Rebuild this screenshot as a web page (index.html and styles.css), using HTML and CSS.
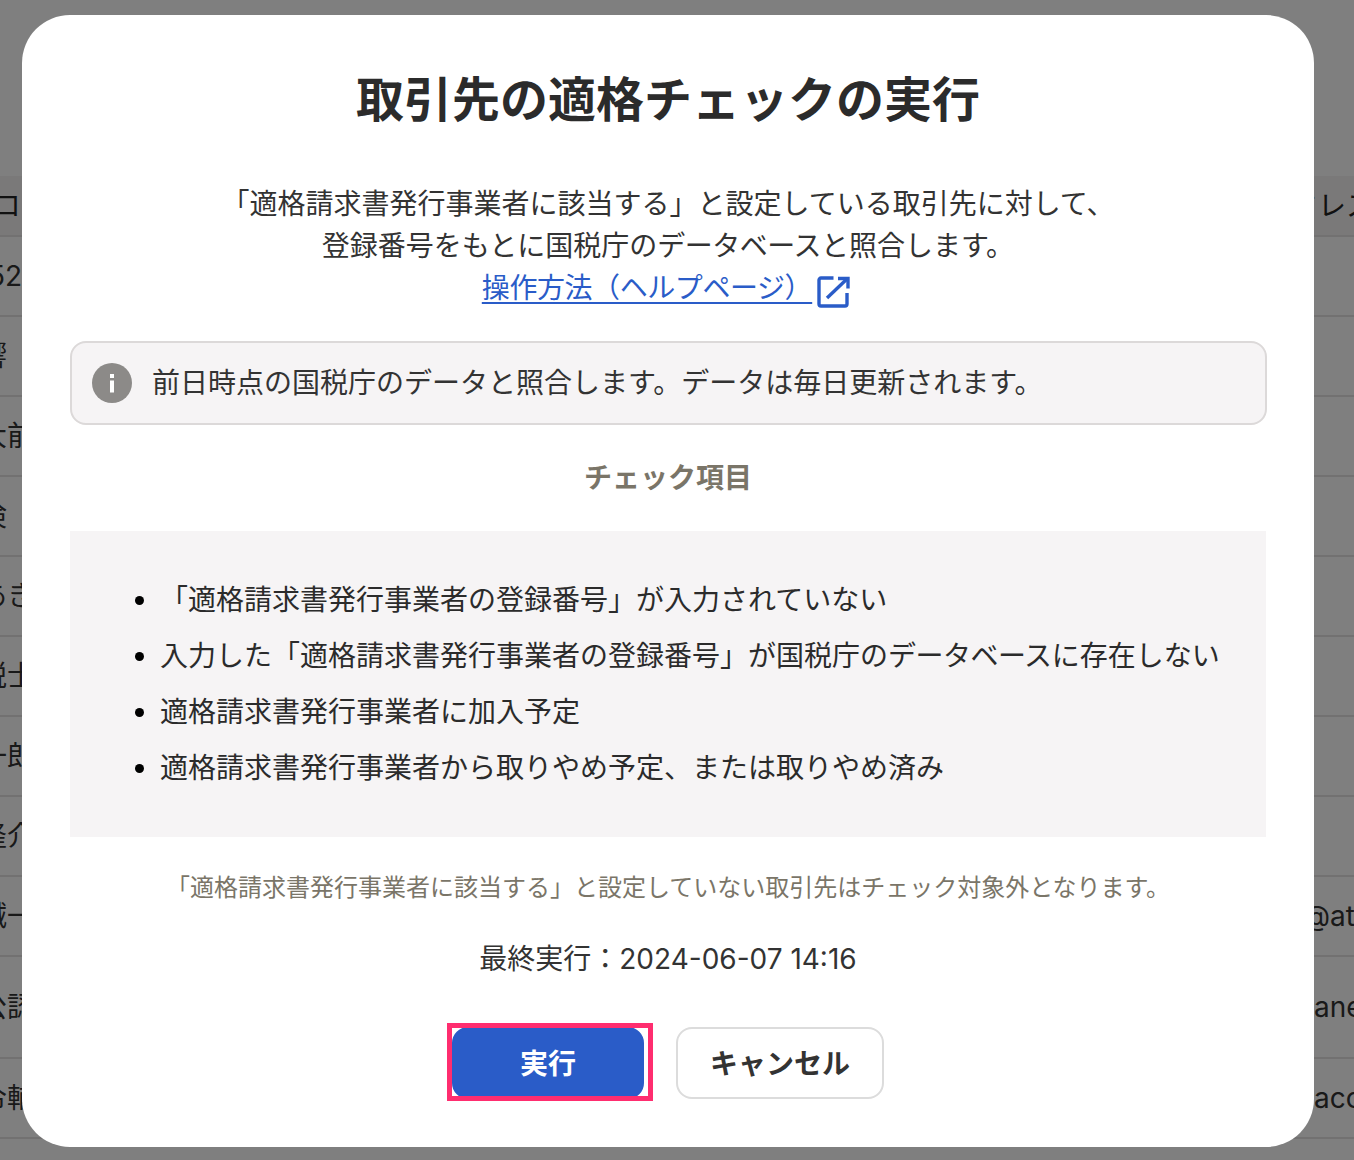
FILE: index.html
```html
<!DOCTYPE html>
<html lang="ja">
<head>
<meta charset="utf-8">
<title>取引先の適格チェックの実行</title>
<link rel="stylesheet" href="styles.css">
</head>
<body>
<div class="table">
  <div class="row head"><div class="cell-l code">コード</div><div class="cell-r addr">アドレス</div></div>
  <div class="row"><div class="cell-l num">52</div><div class="cell-r"></div></div>
  <div class="row"><div class="cell-l">響</div><div class="cell-r"></div></div>
  <div class="row"><div class="cell-l">大前</div><div class="cell-r"></div></div>
  <div class="row"><div class="cell-l">倹</div><div class="cell-r"></div></div>
  <div class="row"><div class="cell-l">あき</div><div class="cell-r"></div></div>
  <div class="row"><div class="cell-l">税士</div><div class="cell-r"></div></div>
  <div class="row"><div class="cell-l">一郎</div><div class="cell-r"></div></div>
  <div class="row"><div class="cell-l">隆介</div><div class="cell-r"></div></div>
  <div class="row"><div class="cell-l">誠一</div><div class="cell-r at">@at</div></div>
  <div class="row tall"><div class="cell-l">公認</div><div class="cell-r">ane</div></div>
  <div class="row"><div class="cell-l">令輔</div><div class="cell-r">acc</div></div>
</div>

<div class="overlay">
  <section class="modal">
    <h1 class="title">取引先の適格チェックの実行</h1>
    <p class="lead">
      「適格請求書発行事業者に該当する」と設定している取引先に対して、<br>
      登録番号をもとに国税庁の<span class="tight">データベース</span>と照合します。<br>
      <a class="help" href="#"><span class="help-text">操作方法（ヘルプページ）</span><svg class="ext-icon" viewBox="0 0 33 32" width="33" height="32" fill="none" stroke="#2a5cc8" stroke-width="3.4"><path d="M16.500 2H4a2 2 0 0 0-2 2V28a2 2 0 0 0 2 2H28a2 2 0 0 0 2-2V17"/><path d="M10 22 30.500 2.500"/><path d="M21 2.500H31V12.500"/></svg></a>
    </p>
    <div class="info">
      <svg class="info-icon" viewBox="0 0 40 40" width="40" height="40"><circle cx="20" cy="20" r="20" fill="#8c8a88"/><rect x="18" y="11" width="4" height="4" fill="#fff"/><rect x="18" y="17.500" width="4" height="12" fill="#fff"/></svg>
      <span class="info-text">前日時点の国税庁のデータと照合します。データは毎日更新されます。</span>
    </div>
    <h2 class="subhead">チェック項目</h2>
    <ul class="checks">
      <li>「適格請求書発行事業者の登録番号」が入力されていない</li>
      <li>入力した「適格請求書発行事業者の登録番号」が国税庁の<span class="tight">データベース</span>に存在しない</li>
      <li>適格請求書発行事業者に加入予定</li>
      <li>適格請求書発行事業者から取りやめ予定、または取りやめ済み</li>
    </ul>
    <p class="note">「適格請求書発行事業者に該当する」と設定していない取引先はチェック対象外となります。</p>
    <p class="last-run">最終実行：2024-06-07 14:16</p>
    <div class="actions">
      <div class="run-wrap">
        <button class="btn primary">実行</button>
        <div class="annotation"></div>
      </div>
      <button class="btn secondary">キャンセル</button>
    </div>
  </section>
</div>
</body>
</html>
```
FILE: styles.css
```css
* { box-sizing: border-box; }
html, body { height: 100%; }
body {
  margin: 0;
  height: 1160px;
  overflow: hidden;
  background: #fff;
  color: #333;
  font-family: Inter, "Noto Sans CJK JP", sans-serif;
  font-size: 28px;
  line-height: 42px;
}
.table { padding-top: 176px; }
.row {
  display: flex;
  justify-content: space-between;
  align-items: center;
  height: 80px;
  border-bottom: 2px solid #e4e2e2;
  color: #333;
}
.row.head { height: 61px; background: #f4f2f2; color: #222; }
.row.tall { height: 102px; }
.cell-l {
  width: 22px;
  white-space: nowrap;
  text-indent: -21px;
}
.cell-l.code { text-indent: -7px; }
.cell-l.num { text-indent: -12px; }
.cell-r {
  width: 40px;
  white-space: nowrap;
}
.cell-r.addr { text-indent: -52px; }
.cell-r.at { text-indent: -11px; }
.overlay {
  position: fixed;
  inset: 0;
  background: rgba(0, 0, 0, .5);
  padding: 15px 40px 13px 22px;
}
.modal {
  height: 1132px;
  background: #fff;
  border-radius: 48px;
  padding: 48px;
  display: flex;
  flex-direction: column;
  align-items: stretch;
  text-align: center;
}
.title {
  margin: 0 0 47px;
  padding-top: 1px;
  font-size: 48px;
  line-height: 72px;
  font-weight: 700;
  color: #2b2b2b;
}
.lead { margin: 0 0 32px; color: #333; }
.tight { letter-spacing: -0.5px; }
.help { color: #2a5cc8; text-decoration: none; }
.help-text {
  letter-spacing: -0.42px;
  text-decoration: underline;
  text-underline-offset: 4px;
  text-decoration-thickness: 2px;
}
.ext-icon { vertical-align: -10px; margin: 0 4px 0 5px; }
.info {
  display: flex;
  flex-shrink: 0;
  align-items: center;
  gap: 20px;
  height: 84px;
  margin-right: -1px;
  padding: 0 20px;
  background: #f6f4f5;
  border: 2px solid #dcd9d9;
  border-radius: 16px;
  text-align: left;
  margin-bottom: 32px;
}
.subhead {
  margin: 0 0 32px;
  font-size: 28px;
  line-height: 42px;
  font-weight: 700;
  color: #7a7568;
}
.checks {
  margin: 0 0 32px;
  padding: 48px 40px 48px 90px;
  background: #f6f4f5;
  list-style: none;
  text-align: left;
  display: flex;
  flex-direction: column;
  gap: 14px;
  color: #2b2b2b;
}
.checks li { position: relative; }
.checks li::before {
  content: "";
  position: absolute;
  left: -25px;
  top: 17px;
  width: 9px;
  height: 9px;
  border-radius: 50%;
  background: #000;
}
.note {
  margin: 0 0 31px;
  padding-top: 1px;
  font-size: 24px;
  line-height: 36px;
  color: #7a7568;
}
.last-run { margin: 0 0 47px; padding-top: 1px; color: #333; }
.actions {
  display: flex;
  justify-content: center;
  gap: 32px;
}
.run-wrap { position: relative; }
.btn {
  display: block;
  height: 72px;
  border-radius: 16px;
  font: inherit;
  font-weight: 700;
  padding: 2px 0 0;
}
.primary {
  width: 192px;
  background: #2a5cc8;
  border: 2px solid #2a5cc8;
  color: #fff;
}
.secondary {
  width: 208px;
  background: #fff;
  border: 2px solid #dcdcdc;
  color: #333;
}
.annotation {
  position: absolute;
  left: -5px;
  top: -4px;
  width: 206px;
  height: 78px;
  border: 5px solid #ff2d6f;
  pointer-events: none;
}
```
